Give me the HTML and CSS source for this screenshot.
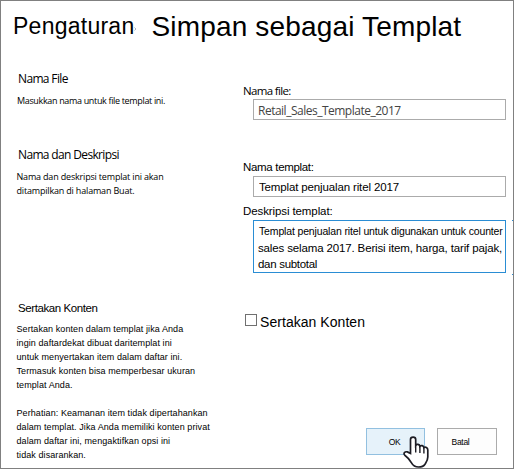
FILE: index.html
```
<!DOCTYPE html>
<html lang="id">
<head>
    <meta charset="UTF-8">
    <meta name="viewport" content="width=device-width, initial-scale=1.0">
    <title>Simpan sebagai Templat</title>
    <link rel="stylesheet" href="styles.css">
</head>
<body>
    <div class="page">
        <header class="header">
            <span class="crumb">Pengaturan</span>
            <svg class="crumb-mark" viewBox="0 0 3 4"><path d="M0.5 0.5L2 2L0.5 3.5" fill="none" stroke="#a9b4c4"/></svg>
            <h1>Simpan sebagai Templat</h1>
        </header>

        <form class="form">
            <section class="info">
                <h2 class="segoe">Nama File</h2>
                <p class="segoe narrow">Masukkan nama untuk file templat ini.</p>
            </section>
            <section class="fields first">
                <label class="segoe" for="fileName">Nama file:</label>
                <input class="file-name" type="text" id="fileName" value="Retail_Sales_Template_2017">
            </section>

            <section class="info">
                <h2 class="segoe">Nama dan Deskripsi</h2>
                <p class="segoe">Nama dan deskripsi templat ini akan<br>ditampilkan di halaman Buat.</p>
            </section>
            <section class="fields">
                <label class="tight" for="templateName">Nama templat:</label>
                <input type="text" id="templateName" value="Templat penjualan ritel 2017">
                <label class="desc-label">Deskripsi templat:</label>
                <div class="description" contenteditable="true" spellcheck="false">
                    <div class="small-line">Templat penjualan ritel untuk digunakan untuk counter</div>
                    <div>sales selama 2017. Berisi item, harga, tarif pajak,</div>
                    <div class="last-line">dan subtotal</div>
                </div>
            </section>

            <section class="info">
                <h2>Sertakan Konten</h2>
                <p>Sertakan konten dalam templat jika Anda<br>ingin daftardekat dibuat daritemplat ini<br>untuk menyertakan item dalam daftar ini.<br>Termasuk konten bisa memperbesar ukuran<br>templat Anda.</p>
                <p class="note">Perhatian: Keamanan item tidak dipertahankan<br>dalam templat. Jika Anda memiliki konten privat<br>dalam daftar ini, mengaktifkan opsi ini<br>tidak disarankan.</p>
            </section>
            <section class="fields">
                <div class="check-row">
                    <input type="checkbox" id="include">
                    <label for="include">Sertakan Konten</label>
                </div>
                <div class="buttons">
                    <button type="button" class="ok">OK
                        <svg class="hand" viewBox="0 0 26 32">
                            <path d="M7.5 17.5V3.6C7.5 0.3 12.7 0.3 12.7 3.6V9.3C13.7 7.8 16.6 8.2 16.9 10.3C18 9 20.6 9.5 20.9 11.5C22.4 10.5 24.8 11.5 24.8 14V21C24.8 24.5 23 26.5 22 28.2C20.5 30.5 18.5 31 15.5 31C12 31 10 29.5 8.5 26.8C6.8 23.8 4.5 21.2 1.8 19.2C0 17.3 2 15.2 4.3 15.9C5.7 16.3 6.8 17.2 7.5 17.5Z" fill="#fff" stroke="#1c1c24" stroke-width="1.7"/>
                            <path d="M12.7 9V16.5M16.9 10V17M20.9 11.3V17.5" fill="none" stroke="#1c1c24" stroke-width="1.4"/>
                        </svg>
                    </button>
                    <button type="button">Batal</button>
                </div>
            </section>
        </form>
    </div>
</body>
</html>
```
FILE: styles.css
```
* {
    box-sizing: border-box;
}

body {
    margin: 0;
    background: #fff;
    color: #000;
    font-family: "Liberation Sans", Arial, sans-serif;
}

.page {
    position: relative;
    width: 514px;
    height: 469px;
    border: 1px solid #808080;
    padding: 0 7px 0 15px;
    overflow: hidden;
}

/* edge of the focused field showing at the window border */
.page::after {
    content: "";
    position: absolute;
    right: 0;
    top: 219px;
    width: 1px;
    height: 53px;
    border-top: 1px solid #2a8dd4;
    border-bottom: 1px solid #2a8dd4;
}

.header {
    display: flex;
    align-items: flex-start;
    height: 69px;
    padding-top: 10px;
    margin-left: -3px;
    white-space: nowrap;
}

.crumb {
    font-size: 23px;
    line-height: 31px;
    letter-spacing: 0.25px;
}

.crumb-mark {
    width: 3px;
    height: 4px;
    margin: 16px 14px 0 0;
}

h1 {
    margin: 0;
    font-size: 28px;
    line-height: 32px;
    font-weight: normal;
    letter-spacing: 0.17px;
}

.form {
    display: grid;
    grid-template-columns: 226px 1fr;
    grid-template-rows: 76px 154px 168px;
}

.info {
    white-space: nowrap;
}

.info h2 {
    margin: 0 0 6px 2px;
    font-size: 11.5px;
    line-height: 16px;
    font-weight: normal;
    letter-spacing: -0.42px;
}

.info p {
    margin: 0 0 0 0.5px;
    font-size: 9px;
    line-height: 14px;
    letter-spacing: 0.08px;
}

.info p.note {
    margin-top: 14px;
}

.segoe {
    font-family: "Open Sans", "Noto Sans", sans-serif;
}

.info h2.segoe {
    margin: 1px 0 7px 2px;
    font-size: 12px;
    letter-spacing: -0.65px;
}

.info p.segoe {
    letter-spacing: -0.18px;
}

.info p.narrow {
    margin-left: 1px;
    letter-spacing: -0.34px;
}

.fields {
    display: flex;
    flex-direction: column;
    padding-top: 13px;
    white-space: nowrap;
}

.fields.first {
    padding-top: 12px;
}

label {
    font-size: 11.5px;
    line-height: 17px;
    letter-spacing: -0.1px;
    padding-left: 1px;
}

label.segoe {
    letter-spacing: -0.65px;
}

label.tight {
    letter-spacing: -0.32px;
}

.desc-label {
    margin-top: 6px;
}

input[type="text"] {
    height: 21px;
    margin: 0 0 0 11px;
    padding: 1px 5px 0;
    border: 1px solid #ababab;
    background: #fff;
    color: #000;
    font: 11.5px "Liberation Sans", Arial, sans-serif;
    letter-spacing: -0.14px;
    outline: none;
}

input[type="text"].file-name {
    padding: 1px 4px 0;
    color: #444;
    font: 12px "Open Sans", "Noto Sans", sans-serif;
    letter-spacing: -0.5px;
}

.description {
    height: 53px;
    margin-left: 11px;
    padding: 2px 0 0 4px;
    border: 1px solid #2a8dd4;
    font-size: 11.5px;
    line-height: 16.5px;
    letter-spacing: -0.14px;
}

.small-line {
    padding-left: 1px;
    font-size: 10.5px;
    letter-spacing: -0.15px;
}

.last-line {
    letter-spacing: -0.3px;
}

.check-row {
    display: flex;
    gap: 3px;
    padding: 1px 0 0 3px;
}

.check-row label {
    padding: 0;
    font-size: 14px;
    line-height: 16px;
    letter-spacing: 0.05px;
}

input[type="checkbox"] {
    appearance: none;
    width: 12px;
    height: 12px;
    margin: 0;
    border: 1px solid #707070;
    background: #fff;
}

.buttons {
    display: flex;
    justify-content: flex-end;
    gap: 12px;
    margin: 98px 9px 0 0;
}

button {
    width: 60px;
    height: 27px;
    padding: 1px 13px 0 0;
    border: 1px solid #ababab;
    background: #fdfdfd;
    color: #000;
    font: 8.5px "Liberation Sans", Arial, sans-serif;
    letter-spacing: -0.3px;
}

button.ok {
    position: relative;
    width: 59px;
    padding: 0 2px 0 0;
    border-color: #92c0e0;
    background: #e6f2fa;
}

.hand {
    position: absolute;
    left: 36px;
    top: 7px;
    width: 26px;
    height: 32px;
}
```
